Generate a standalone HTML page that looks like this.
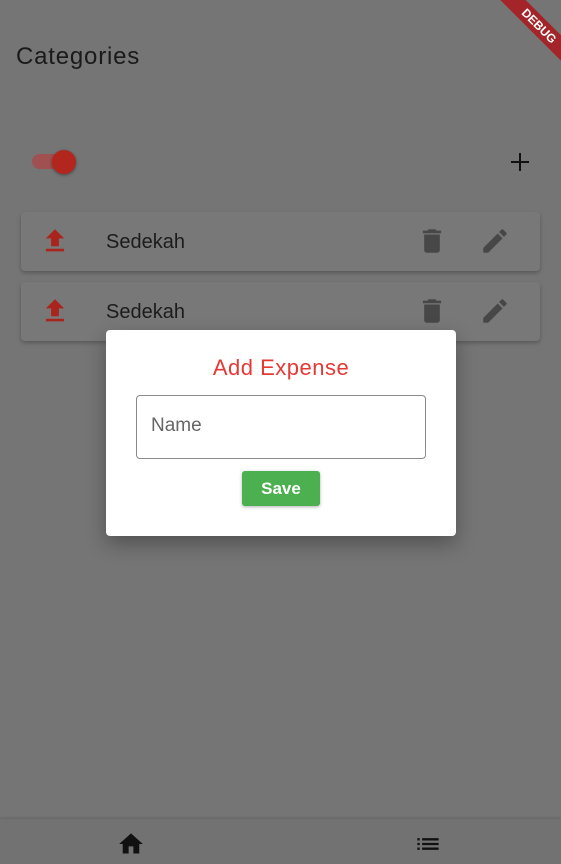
<!DOCTYPE html>
<html><head><style>
*{margin:0;padding:0;box-sizing:border-box}
body{width:561px;height:864px;background:#757575;position:relative;overflow:hidden;font-family:"Liberation Sans",sans-serif}
.title{position:absolute;left:16px;top:43px;font-size:24px;color:#1a1a1a;letter-spacing:0.8px}
.card{position:absolute;left:21px;width:519px;height:59px;background:#787878;border-radius:4px;box-shadow:0 2px 4px rgba(0,0,0,0.25)}
.card .t{position:absolute;left:85px;top:19px;font-size:20px;color:#1c1c1c}
.nav{position:absolute;left:0;top:819px;width:561px;height:45px;background:#727272;box-shadow:0 -1px 3px rgba(0,0,0,0.15)}
.dlg{position:absolute;left:106px;top:330px;width:350px;height:206px;background:#fff;border-radius:4px;box-shadow:0 8px 20px rgba(0,0,0,0.3)}
</style></head><body>
<div class="title">Categories</div>
<div style="position:absolute;left:32px;top:154px;width:38px;height:15px;border-radius:8px;background:#a05050"></div>
<div style="position:absolute;left:52px;top:150px;width:24px;height:24px;border-radius:50%;background:#b3261e;box-shadow:0 1px 3px rgba(0,0,0,0.4)"></div>
<svg style="position:absolute;left:508px;top:150px" width="24" height="24" viewBox="0 0 24 24"><path d="M12 3v18M3 12h18" stroke="#111" stroke-width="2"/></svg>
<div class="card" style="top:212px"><svg style="position:absolute;left:21px;top:16px" width="26" height="26" viewBox="2 2 20 20"><path d="M9 16h6v-6h4l-7-7-7 7h4zm-4 2h14v2H5z" fill="#a8241d"/></svg><div class="t">Sedekah</div>
<svg style="position:absolute;left:398px;top:16px" width="26" height="26" viewBox="2 2 20 20"><path d="M6 19c0 1.1.9 2 2 2h8c1.1 0 2-.9 2-2V7H6v12zM19 4h-3.5l-1-1h-5l-1 1H5v2h14V4z" fill="#474747"/></svg>
<svg style="position:absolute;left:461px;top:16px" width="26" height="26" viewBox="2 2 20 20"><path d="M3 17.25V21h3.75L17.81 9.94l-3.75-3.75L3 17.25zM20.71 7.04a1 1 0 000-1.41l-2.34-2.34a1 1 0 00-1.41 0l-1.83 1.83 3.75 3.75 1.83-1.83z" fill="#474747"/></svg></div>
<div class="card" style="top:282px"><svg style="position:absolute;left:21px;top:16px" width="26" height="26" viewBox="2 2 20 20"><path d="M9 16h6v-6h4l-7-7-7 7h4zm-4 2h14v2H5z" fill="#a8241d"/></svg><div class="t">Sedekah</div>
<svg style="position:absolute;left:398px;top:16px" width="26" height="26" viewBox="2 2 20 20"><path d="M6 19c0 1.1.9 2 2 2h8c1.1 0 2-.9 2-2V7H6v12zM19 4h-3.5l-1-1h-5l-1 1H5v2h14V4z" fill="#474747"/></svg>
<svg style="position:absolute;left:461px;top:16px" width="26" height="26" viewBox="2 2 20 20"><path d="M3 17.25V21h3.75L17.81 9.94l-3.75-3.75L3 17.25zM20.71 7.04a1 1 0 000-1.41l-2.34-2.34a1 1 0 00-1.41 0l-1.83 1.83 3.75 3.75 1.83-1.83z" fill="#474747"/></svg></div>
<div class="dlg">
<div style="position:absolute;left:0;width:350px;top:25px;text-align:center;font-size:22px;color:#e53935;letter-spacing:0.5px">Add Expense</div>
<div style="position:absolute;left:30px;top:65px;width:290px;height:64px;border:1px solid #8a8a8a;border-radius:4px"><span style="position:absolute;left:14px;top:19px;font-size:19px;color:#666">Name</span></div>
<div style="position:absolute;left:136px;top:141px;width:78px;height:35px;background:#4caf50;border-radius:3px;color:#fff;font-size:17px;font-weight:bold;text-align:center;line-height:35px;box-shadow:0 1px 3px rgba(0,0,0,0.3)">Save</div>
</div>
<div class="nav">
<svg style="position:absolute;left:118px;top:12px" width="26" height="26" viewBox="1 1 22 22"><path d="M10 20v-6h4v6h5v-8h3L12 3 2 12h3v8z" fill="#111"/></svg>
<svg style="position:absolute;left:415px;top:12px" width="26" height="26" viewBox="1 1 22 22"><path d="M3 13h2v-2H3v2zm0 4h2v-2H3v2zm0-8h2V7H3v2zm4 4h14v-2H7v2zm0 4h14v-2H7v2zM7 7v2h14V7H7z" fill="#111"/></svg>
</div>
<div style="position:absolute;left:484px;top:17px;width:110px;height:18px;background:#a3252a;transform:rotate(45deg);color:#fff;font-size:12px;font-weight:bold;text-align:center;line-height:18px">DEBUG</div>
</body></html>
